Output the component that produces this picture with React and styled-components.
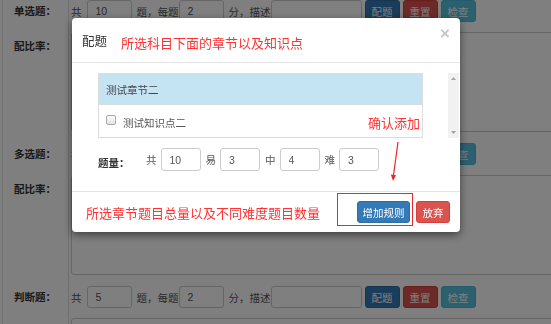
import React from 'react'
import styled, { createGlobalStyle } from 'styled-components'

const GlobalStyle = createGlobalStyle`
  html, body {
    margin: 0;
    padding: 0;
    background: #fff;
    overflow: hidden;
  }
  body {
    width: 551px;
    height: 324px;
    font-family: "Liberation Sans", "Noto Sans CJK SC", sans-serif;
    font-size: 10.5px;
    color: #555;
  }
`

const sections = [
  { name: '单选题', total: 10, score: 2 },
  { name: '多选题', total: 10, score: 2 },
  { name: '判断题', total: 5, score: 2 },
]

const btnColors = {
  primary: ['#337ab7', '#2e6da4'],
  danger: ['#d9534f', '#d43f3a'],
  info: ['#5bc0de', '#46b8da'],
}

function App() {
  return (
    <>
      <GlobalStyle />
      <Page>
        {sections.map((s) => (
          <Section key={s.name}>
            <Label $top={3}>{s.name}：</Label>
            <Row>
              <Word $l={2} $r={5}>共</Word>
              <Field $w={45} defaultValue={s.total} />
              <Word>题，每题</Word>
              <Field $w={45} defaultValue={s.score} />
              <Word>分，描述</Word>
              <Field $w={91} defaultValue="" />
              <Actions>
                <Btn $kind="primary" $w={35}>配题</Btn>
                <Btn $kind="danger" $w={35}>重置</Btn>
                <Btn $kind="info" $w={35}>检查</Btn>
              </Actions>
            </Row>
            <Label $top={6}>配比率：</Label>
            <Cell>
              <Ratio />
            </Cell>
          </Section>
        ))}
      </Page>

      <Backdrop />

      <Modal>
        <Header>
          <Title>配题</Title>
          <Note $top={4}>所选科目下面的章节以及知识点</Note>
          <Close>×</Close>
        </Header>

        <Body>
          <ScrollArea>
            <List>
              <ChapterRow>测试章节二</ChapterRow>
              <PointRow>
                <Check type="checkbox" />
                测试知识点二
              </PointRow>
            </List>
            <Scrollbar>
              <svg width="11" height="11" viewBox="0 0 11 11">
                <path d="M3 7 L5.5 4 L8 7 Z" fill="#a3a3a3" />
              </svg>
              <svg width="11" height="11" viewBox="0 0 11 11">
                <path d="M3 4 L5.5 7 L8 4 Z" fill="#a3a3a3" />
              </svg>
            </Scrollbar>
          </ScrollArea>

          <CountRow>
            <CountLabel>题量：</CountLabel>
            <Word $r={4}>共</Word>
            <Field $w={40} $h={23} defaultValue="10" />
            <Word $r={4}>易</Word>
            <Field $w={40} $h={23} defaultValue="3" />
            <Word $r={4}>中</Word>
            <Field $w={40} $h={23} defaultValue="4" />
            <Word $r={4}>难</Word>
            <Field $w={40} $h={23} defaultValue="3" />
          </CountRow>
        </Body>

        <Footer>
          <Note>所选章节题目总量以及不同难度题目数量</Note>
          <Actions $gap={6}>
            <Btn $kind="primary" $w={53}>增加规则</Btn>
            <Btn $kind="danger" $w={34}>放弃</Btn>
          </Actions>
        </Footer>

        <Callout>确认添加</Callout>
        <Arrow width="14" height="44" viewBox="0 0 14 44">
          <line x1="10" y1="2" x2="5.4" y2="36" stroke="#e8262b" strokeWidth="1.2" />
          <path d="M2.8 34.5 L8 35.2 L5 41 Z" fill="#e8262b" />
        </Arrow>
        <Frame />
      </Modal>
    </>
  )
}

export default App

const Page = styled.div`
  margin-left: 2px;
  border-left: 1px solid #e4e4e4;
  height: 324px;
`

const Section = styled.div`
  display: grid;
  grid-template-columns: 66px 1fr;
  grid-template-rows: 32px 111px;
`

const Label = styled.div`
  box-sizing: border-box;
  border-right: 1px solid #dcdcdc;
  padding: ${(p) => p.$top}px 0 0 11px;
  font-weight: bold;
  color: #333;
  font-family: "Noto Sans CJK SC", sans-serif;
  line-height: 16px;
`

const Row = styled.div`
  display: flex;
  align-items: center;
  height: 22px;
`

const Cell = styled.div`
  min-width: 0;
`

const Word = styled.span`
  margin: 0 ${(p) => p.$r || 0}px 0 ${(p) => (p.$l === undefined ? 5 : p.$l)}px;
  white-space: nowrap;
  color: #555;
  font-family: "Noto Sans CJK SC", sans-serif;
`

const Field = styled.input`
  box-sizing: border-box;
  width: ${(p) => p.$w}px;
  height: ${(p) => p.$h || 22}px;
  border: 1px solid #ccc;
  border-radius: 3px;
  padding: 0 8px;
  font-family: "Liberation Sans", sans-serif;
  font-size: 10.5px;
  color: #555;
  background: #fff;
  outline: none;
  flex: none;
`

const Actions = styled.div`
  display: flex;
  gap: ${(p) => p.$gap || 3}px;
  margin-left: ${(p) => (p.$gap ? 'auto' : '3px')};
`

const Btn = styled.button`
  box-sizing: border-box;
  width: ${(p) => p.$w}px;
  height: 22px;
  padding: 0;
  border: 1px solid ${(p) => btnColors[p.$kind][1]};
  border-radius: 3px;
  background: ${(p) => btnColors[p.$kind][0]};
  color: #fff;
  font-family: "Noto Sans CJK SC", sans-serif;
  font-size: 10.5px;
  cursor: pointer;
`

const Ratio = styled.textarea`
  display: block;
  box-sizing: border-box;
  width: 520px;
  height: 100px;
  margin-left: 2px;
  border: 1px solid #ccc;
  border-radius: 3px;
  resize: none;
  background: #fff;
`

const Backdrop = styled.div`
  position: fixed;
  inset: 0;
  background: rgba(0, 0, 0, 0.5);
`

const Modal = styled.div`
  position: fixed;
  left: 72px;
  top: 18px;
  width: 388px;
  box-sizing: border-box;
  background: #fff;
  border-radius: 4px;
  box-shadow: 0 3px 9px rgba(0, 0, 0, 0.5);
`

const Header = styled.div`
  box-sizing: border-box;
  height: 45px;
  display: flex;
  align-items: center;
  padding: 0 10px;
  border-bottom: 1px solid #e5e5e5;
`

const Title = styled.span`
  font-family: "Noto Sans CJK SC", sans-serif;
  font-size: 12.5px;
  color: #333;
`

const Note = styled.span`
  margin: ${(p) => p.$top || 0}px 0 0 14px;
  font-family: "Noto Sans CJK SC", sans-serif;
  font-size: 13px;
  color: #f33;
  white-space: nowrap;
`

const Close = styled.span`
  margin-left: auto;
  align-self: flex-start;
  margin-top: 7px;
  font-family: "Liberation Sans", sans-serif;
  font-size: 17px;
  font-weight: bold;
  line-height: 1;
  color: #c6c6c6;
`

const Body = styled.div`
  padding: 10px 1px 20px 26px;
`

const ScrollArea = styled.div`
  display: flex;
  height: 65px;
`

const List = styled.div`
  flex: 0 0 325px;
  box-sizing: border-box;
  border: 1px solid #ddd;
`

const ChapterRow = styled.div`
  height: 30px;
  display: flex;
  align-items: center;
  padding-left: 7px;
  background: #c4e3f3;
  border-bottom: 1px solid #d4dde2;
  color: #444;
  font-family: "Noto Sans CJK SC", sans-serif;
`

const PointRow = styled.div`
  height: 32px;
  display: flex;
  align-items: center;
  padding: 2px 0 0 7px;
  box-sizing: border-box;
  color: #555;
  font-family: "Noto Sans CJK SC", sans-serif;
`

const Check = styled.input`
  appearance: none;
  width: 10px;
  height: 10px;
  margin: -4px 7px 0 0;
  border: 1px solid #a9a9a9;
  border-radius: 2px;
  background: linear-gradient(#fdfdfd, #e4e4e4);
`

const Scrollbar = styled.div`
  margin-left: auto;
  width: 11px;
  background: #f1f1f1;
  display: flex;
  flex-direction: column;
  justify-content: space-between;
`

const CountRow = styled.div`
  display: flex;
  align-items: center;
  margin-top: 10px;
`

const CountLabel = styled.span`
  width: 43px;
  margin-top: 5px;
  font-weight: bold;
  color: #333;
  font-family: "Noto Sans CJK SC", sans-serif;
`

const Footer = styled.div`
  box-sizing: border-box;
  height: 41px;
  display: flex;
  align-items: center;
  padding: 0 10px 0 0;
  border-top: 1px solid #e5e5e5;
`

const Callout = styled.span`
  position: absolute;
  left: 296px;
  top: 96px;
  font-family: "Noto Sans CJK SC", sans-serif;
  font-size: 13px;
  line-height: 17px;
  color: #f33;
`

const Arrow = styled.svg`
  position: absolute;
  left: 316px;
  top: 122px;
`

const Frame = styled.div`
  position: absolute;
  left: 265px;
  top: 175px;
  width: 76px;
  height: 33px;
  box-sizing: border-box;
  border: 1.5px solid #e8262b;
`
